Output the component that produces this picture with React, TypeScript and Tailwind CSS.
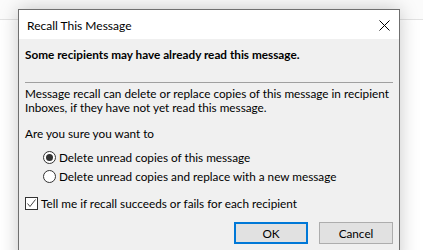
import React from "react";

const font = { fontFamily: 'Lato, "Liberation Sans", sans-serif' };

const Radio = ({ checked, label }: { checked?: boolean; label: string }) => (
  <label className="flex items-center h-[13px]">
    <span className="w-[13px] h-[13px] rounded-full border border-[#333] bg-white flex items-center justify-center">
      {checked && <span className="w-[7px] h-[7px] rounded-full bg-[#333]" />}
    </span>
    <span className="ml-[3px]">{label}</span>
  </label>
);

export default function App() {
  return (
    <div
      className="relative w-[423px] h-[250px] overflow-hidden bg-white text-black"
      style={font}
    >
      <div className="h-[20px] border-b border-[#e2e2e2] bg-[#fbfbfb]" />

      {/* dialog window */}
      <div className="absolute left-[18px] top-[9px] w-[382px] h-[260px] border border-[#6f6f6f] bg-[#f0f0f0] shadow-[0_0_18px_rgba(0,0,0,0.22)] flex flex-col">
        <div className="h-[29px] bg-white flex items-center justify-between pl-[8px] pr-[9px] pt-[3px]">
          <span className="text-[12px]">Recall This Message</span>
          <svg width="11" height="11" viewBox="0 0 11 11" className="-mt-[2px]">
            <path d="M0.5 0.5 L10.5 10.5 M10.5 0.5 L0.5 10.5" stroke="#000" strokeWidth="1" />
          </svg>
        </div>

        <div className="flex flex-col px-[6px] text-[11.75px] leading-[13px] whitespace-nowrap">
          <p className="mt-[9px] font-bold">
            Some recipients may have already read this message.
          </p>
          <div className="mt-[21px] h-px bg-[#a0a0a0]" />
          <p className="mt-[4px] leading-[14px]">
            Message recall can delete or replace copies of this message in recipient
          </p>
          <p className="leading-[14px]">Inboxes, if they have not yet read this message.</p>
          <p className="mt-[12px]">Are you sure you want to</p>

          <div className="mt-[11px] ml-[18px] flex flex-col gap-[6px]">
            <Radio checked label="Delete unread copies of this message" />
            <Radio label="Delete unread copies and replace with a new message" />
          </div>

          <label className="mt-[14px] flex items-center h-[13px]">
            <span className="w-[13px] h-[13px] border border-[#333] bg-white flex items-center justify-center">
              <svg width="11" height="11" viewBox="0 0 11 11">
                <path d="M1.5 5.5 L4 8.5 L9.5 1.5" stroke="#444" strokeWidth="1" fill="none" />
              </svg>
            </span>
            <span className="ml-[3px]">Tell me if recall succeeds or fails for each recipient</span>
          </label>

          <div className="mt-[12px] flex justify-end gap-[11px]">
            <button className="w-[74px] h-[22px] border-2 border-[#0078d7] bg-[#e1e1e1] text-[11.75px]">
              OK
            </button>
            <button className="w-[74px] h-[22px] border border-[#adadad] bg-[#e1e1e1] text-[11.75px]">
              Cancel
            </button>
          </div>
        </div>
      </div>
    </div>
  );
}
